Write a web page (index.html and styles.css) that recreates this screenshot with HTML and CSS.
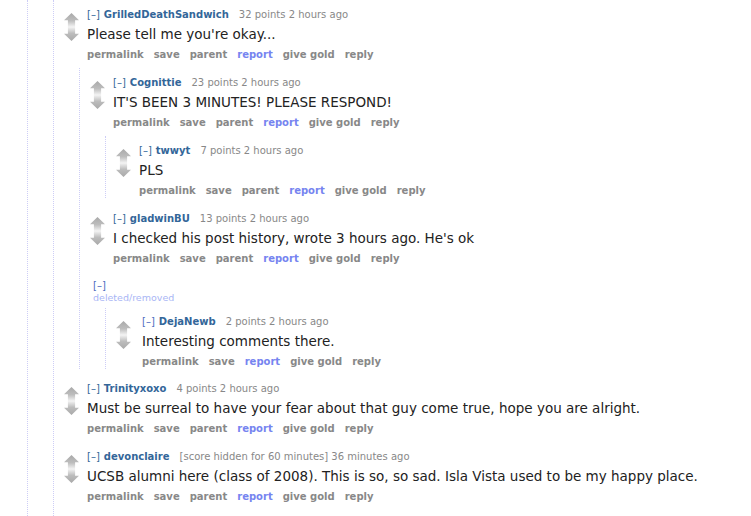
FILE: index.html
```html
<!DOCTYPE html>
<html lang="en">
<head>
    <meta charset="UTF-8">
    <meta name="viewport" content="width=device-width, initial-scale=1.0">
    <title>Comments</title>
    <link rel="stylesheet" href="styles.css">
</head>
<body>
<div class="thread">
  <div class="comment offscreen">
    <div class="child outer">

      <div class="comment">
        <div class="row">
          <div class="midcol"><div class="arrow up"></div><div class="arrow down"></div></div>
          <div class="entry">
            <p class="tagline"><span class="expand">[&ndash;]</span><a class="author">GrilledDeathSandwich</a><span class="score">32 points</span> 2 hours ago</p>
            <div class="md">Please tell me you're okay...</div>
            <ul class="buttons"><li>permalink</li><li>save</li><li>parent</li><li class="report">report</li><li>give gold</li><li>reply</li></ul>
          </div>
        </div>
        <div class="child">

          <div class="comment">
            <div class="row">
              <div class="midcol"><div class="arrow up"></div><div class="arrow down"></div></div>
              <div class="entry">
                <p class="tagline"><span class="expand">[&ndash;]</span><a class="author">Cognittie</a><span class="score">23 points</span> 2 hours ago</p>
                <div class="md">IT'S BEEN 3 MINUTES! PLEASE RESPOND!</div>
                <ul class="buttons"><li>permalink</li><li>save</li><li>parent</li><li class="report">report</li><li>give gold</li><li>reply</li></ul>
              </div>
            </div>
            <div class="child">

              <div class="comment">
                <div class="row">
                  <div class="midcol"><div class="arrow up"></div><div class="arrow down"></div></div>
                  <div class="entry">
                    <p class="tagline"><span class="expand">[&ndash;]</span><a class="author">twwyt</a><span class="score">7 points</span> 2 hours ago</p>
                    <div class="md">PLS</div>
                    <ul class="buttons"><li>permalink</li><li>save</li><li>parent</li><li class="report">report</li><li>give gold</li><li>reply</li></ul>
                  </div>
                </div>
              </div>

            </div>
          </div>

          <div class="comment">
            <div class="row">
              <div class="midcol"><div class="arrow up"></div><div class="arrow down"></div></div>
              <div class="entry">
                <p class="tagline"><span class="expand">[&ndash;]</span><a class="author">gladwinBU</a><span class="score">13 points</span> 2 hours ago</p>
                <div class="md">I checked his post history, wrote 3 hours ago. He's ok</div>
                <ul class="buttons"><li>permalink</li><li>save</li><li>parent</li><li class="report">report</li><li>give gold</li><li>reply</li></ul>
              </div>
            </div>
          </div>

          <div class="comment deleted">
            <div class="row">
              <div class="entry">
                <p class="tagline"><span class="expand">[&ndash;]</span></p>
                <div class="deleted-text">deleted/removed</div>
              </div>
            </div>
            <div class="child">

              <div class="comment">
                <div class="row">
                  <div class="midcol"><div class="arrow up"></div><div class="arrow down"></div></div>
                  <div class="entry">
                    <p class="tagline"><span class="expand">[&ndash;]</span><a class="author">DejaNewb</a><span class="score">2 points</span> 2 hours ago</p>
                    <div class="md">Interesting comments there.</div>
                    <ul class="buttons"><li>permalink</li><li>save</li><li class="report">report</li><li>give gold</li><li>reply</li></ul>
                  </div>
                </div>
              </div>

            </div>
          </div>

        </div>
      </div>

      <div class="comment">
        <div class="row">
          <div class="midcol"><div class="arrow up"></div><div class="arrow down"></div></div>
          <div class="entry">
            <p class="tagline"><span class="expand">[&ndash;]</span><a class="author">Trinityxoxo</a><span class="score">4 points</span> 2 hours ago</p>
            <div class="md">Must be surreal to have your fear about that guy come true, hope you are alright.</div>
            <ul class="buttons"><li>permalink</li><li>save</li><li>parent</li><li class="report">report</li><li>give gold</li><li>reply</li></ul>
          </div>
        </div>
      </div>

      <div class="comment">
        <div class="row">
          <div class="midcol"><div class="arrow up"></div><div class="arrow down"></div></div>
          <div class="entry">
            <p class="tagline"><span class="expand">[&ndash;]</span><a class="author">devonclaire</a><span class="score">[score hidden for 60 minutes]</span> 36 minutes ago</p>
            <div class="md">UCSB alumni here (class of 2008). This is so, so sad. Isla Vista used to be my happy place.</div>
            <ul class="buttons"><li>permalink</li><li>save</li><li>parent</li><li class="report">report</li><li>give gold</li><li>reply</li></ul>
          </div>
        </div>
      </div>

    </div>
  </div>
</div>
</body>
</html>
```

FILE: styles.css
```css
body {
    margin: 0;
    font-family: Verdana, "DejaVu Sans", sans-serif;
    color: #222;
    background: #fff;
}

.thread {
    margin-left: 27px;
    border-left: 1px dotted #cdcdf6;
}

.comment {
    margin-left: 10px;
    padding-top: 7px;
}

.offscreen {
    padding-top: 0;
}

.child {
    margin-left: 15px;
    border-left: 1px dotted #cdcdf6;
}

.outer {
    min-height: 516px;
}

.row {
    display: flex;
    margin-bottom: 6px;
}

.midcol {
    width: 15px;
    margin-right: 8px;
    padding-top: 6px;
    display: flex;
    flex-direction: column;
}

.arrow {
    width: 15px;
    height: 14px;
}

.arrow.up {
    clip-path: polygon(50% 0, 100% 52%, 74% 52%, 74% 100%, 26% 100%, 26% 52%, 0 52%);
    background: linear-gradient(#a9a9a9, #bdbdbd 55%, #f4f4f4);
}

.arrow.down {
    clip-path: polygon(26% 0, 74% 0, 74% 48%, 100% 48%, 50% 100%, 0 48%, 26% 48%);
    background: linear-gradient(#f4f4f4, #bdbdbd 45%, #a9a9a9);
}

.entry {
    flex: 1;
    padding-top: 1px;
}

.tagline {
    margin: 0;
    font-size: 10px;
    line-height: 14px;
    color: #888;
}

.expand {
    color: #369;
    margin-right: 4px;
}

.author {
    color: #369;
    font-weight: bold;
    margin-right: 10px;
}

.md {
    margin-top: 2px;
    font-size: 13.5px;
    line-height: 20px;
}

.buttons {
    list-style: none;
    margin: 4px 0 0;
    padding: 0;
    display: flex;
    gap: 10px;
    font-size: 10px;
    font-weight: bold;
    line-height: 14px;
    color: #888;
}

.buttons .report {
    color: #7684f0;
}

.deleted .entry {
    margin-left: 3px;
    padding-top: 0;
}

.deleted .expand {
    color: #4d6bbf;
}

.deleted-text {
    font-size: 9.5px;
    line-height: 10px;
    color: #a9b6f5;
}

.deleted .row {
    margin-bottom: 5px;
}
```
